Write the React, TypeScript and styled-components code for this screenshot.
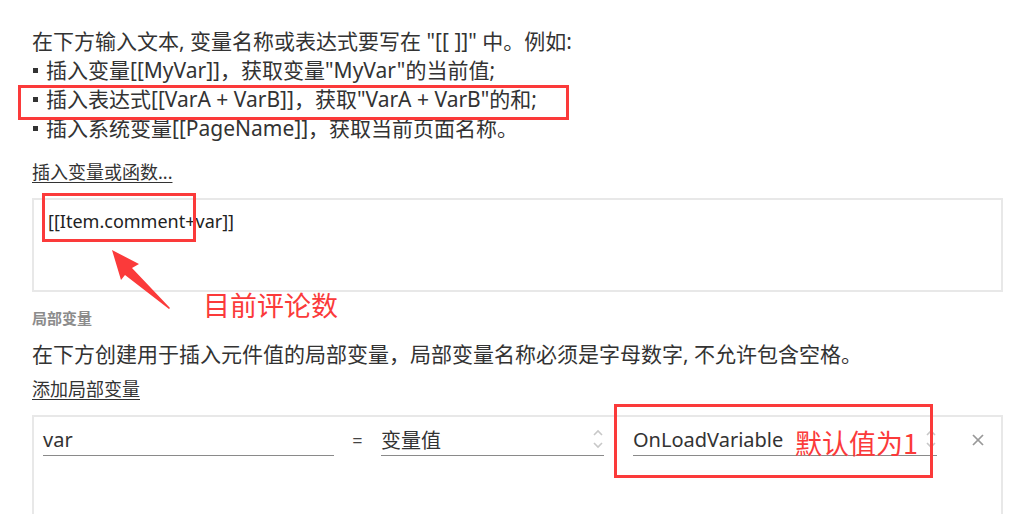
import React from "react";
import styled, { createGlobalStyle } from "styled-components";

const Global = createGlobalStyle`
  html, body { margin: 0; padding: 0; background: #fff; }
  body {
    font-family: "Noto Sans", "Noto Sans CJK SC", sans-serif;
    color: #333;
    overflow: hidden;
  }
`;

const Page = styled.div`
  position: relative;
  width: 1015px;
  height: 514px;
  overflow: hidden;
  padding: 27px 12px 0 32px;
  box-sizing: border-box;
  display: flex;
  flex-direction: column;
  & > * { flex-shrink: 0; }
`;

const Intro = styled.div`
  font-size: 21px;
  line-height: 29px;
  color: #333;
  white-space: nowrap;
`;

const Line = styled.div``;

const Bullet = styled.span`
  display: inline-block;
  width: 5px;
  height: 5px;
  background: #333;
  margin: 0 8px 4px 1px;
  vertical-align: middle;
`;

const LinkText = styled.span<{ $mt: number }>`
  align-self: flex-start;
  margin-top: ${(p) => p.$mt}px;
  font-size: 18px;
  line-height: 22px;
  color: #333;
  text-decoration: underline;
  text-underline-offset: 3px;
  cursor: pointer;
`;

const TextBox = styled.div`
  margin-top: 15px;
  height: 94px;
  border: 2px solid #e8e8e8;
  box-sizing: border-box;
  padding: 10px 14px;
  font-size: 18px;
  line-height: 22px;
  color: #222;
`;

const SectionLabel = styled.div`
  margin-top: 17px;
  font-size: 15px;
  line-height: 18px;
  font-weight: bold;
  color: #8c8c8c;
`;

const Desc = styled.div`
  margin-top: 14px;
  font-size: 21px;
  line-height: 26px;
  color: #333;
  white-space: nowrap;
`;

const VarBox = styled.div`
  margin-top: 15px;
  height: 130px;
  border: 2px solid #e8e8e8;
  border-bottom: none;
  box-sizing: border-box;
  padding: 7px 0 0 9px;
`;

const VarRow = styled.div`
  display: grid;
  grid-template-columns: 291px 47px 223px 29px 304px 1fr;
  align-items: end;
`;

const Field = styled.div`
  display: flex;
  align-items: center;
  justify-content: space-between;
  height: 30px;
  border-bottom: 1px solid #8a8a8a;
  font-size: 20px;
  color: #333;
  padding-bottom: 1px;
`;

const Equals = styled.div`
  text-align: center;
  font-size: 18px;
  line-height: 30px;
  color: #444;
  padding-bottom: 1px;
`;

const Spacer = styled.div``;

const Close = styled.div`
  display: flex;
  justify-content: center;
  align-items: center;
  height: 30px;
  padding-left: 18px;
  padding-bottom: 1px;
  color: #999;
`;

const Chevron = () => (
  <svg width="12" height="22" viewBox="0 0 12 22" fill="none" stroke="#c8c8c8" strokeWidth="1.6">
    <polyline points="2,7 6,3 10,7" />
    <polyline points="2,15 6,19 10,15" />
  </svg>
);

const XIcon = () => (
  <svg width="14" height="14" viewBox="0 0 14 14" stroke="#999" strokeWidth="1.7">
    <line x1="2" y1="2" x2="12" y2="12" />
    <line x1="12" y1="2" x2="2" y2="12" />
  </svg>
);

const RedBox = styled.div<{ $x: number; $y: number; $w: number; $h: number }>`
  position: absolute;
  left: ${(p) => p.$x}px;
  top: ${(p) => p.$y}px;
  width: ${(p) => p.$w}px;
  height: ${(p) => p.$h}px;
  border: 3px solid #fb3a3a;
  box-sizing: border-box;
  pointer-events: none;
`;

const RedNote = styled.div<{ $x: number; $y: number; $size: number }>`
  position: absolute;
  left: ${(p) => p.$x}px;
  top: ${(p) => p.$y}px;
  font-size: ${(p) => p.$size}px;
  line-height: 1;
  color: #fb3a3a;
  font-family: "Noto Sans CJK SC", sans-serif;
  white-space: nowrap;
`;

const ArrowSvg = styled.svg`
  position: absolute;
  left: 105px;
  top: 244px;
`;

export default function App() {
  return (
    <>
      <Global />
      <Page>
        <Intro>
          <Line>在下方输入文本, 变量名称或表达式要写在 "[[ ]]" 中。例如:</Line>
          <Line>
            <Bullet />插入变量[[MyVar]]，获取变量"MyVar"的当前值;
          </Line>
          <Line>
            <Bullet />插入表达式[[VarA + VarB]]，获取"VarA + VarB"的和;
          </Line>
          <Line>
            <Bullet />插入系统变量[[PageName]]，获取当前页面名称。
          </Line>
        </Intro>
        <LinkText $mt={18}>插入变量或函数...</LinkText>
        <TextBox>[[Item.comment+var]]</TextBox>
        <SectionLabel>局部变量</SectionLabel>
        <Desc>在下方创建用于插入元件值的局部变量，局部变量名称必须是字母数字, 不允许包含空格。</Desc>
        <LinkText $mt={11}>添加局部变量</LinkText>
        <VarBox>
          <VarRow>
            <Field>var</Field>
            <Equals>=</Equals>
            <Field>
              变量值
              <Chevron />
            </Field>
            <Spacer />
            <Field>
              OnLoadVariable
              <Chevron />
            </Field>
            <Close>
              <XIcon />
            </Close>
          </VarRow>
        </VarBox>

        <RedBox $x={18} $y={85} $w={551} $h={35} />
        <RedBox $x={42} $y={193} $w={154} $h={49} />
        <RedBox $x={614} $y={404} $w={319} $h={74} />
        <RedNote $x={203} $y={291} $size={27}>目前评论数</RedNote>
        <RedNote $x={795} $y={429} $size={27}>默认值为1</RedNote>
        <ArrowSvg width="70" height="70" viewBox="0 0 70 70">
          <polygon points="7,6 34,20 27,24 65,64 64,65 20,31 16,36" fill="#fb3a3a" />
        </ArrowSvg>
      </Page>
    </>
  );
}
